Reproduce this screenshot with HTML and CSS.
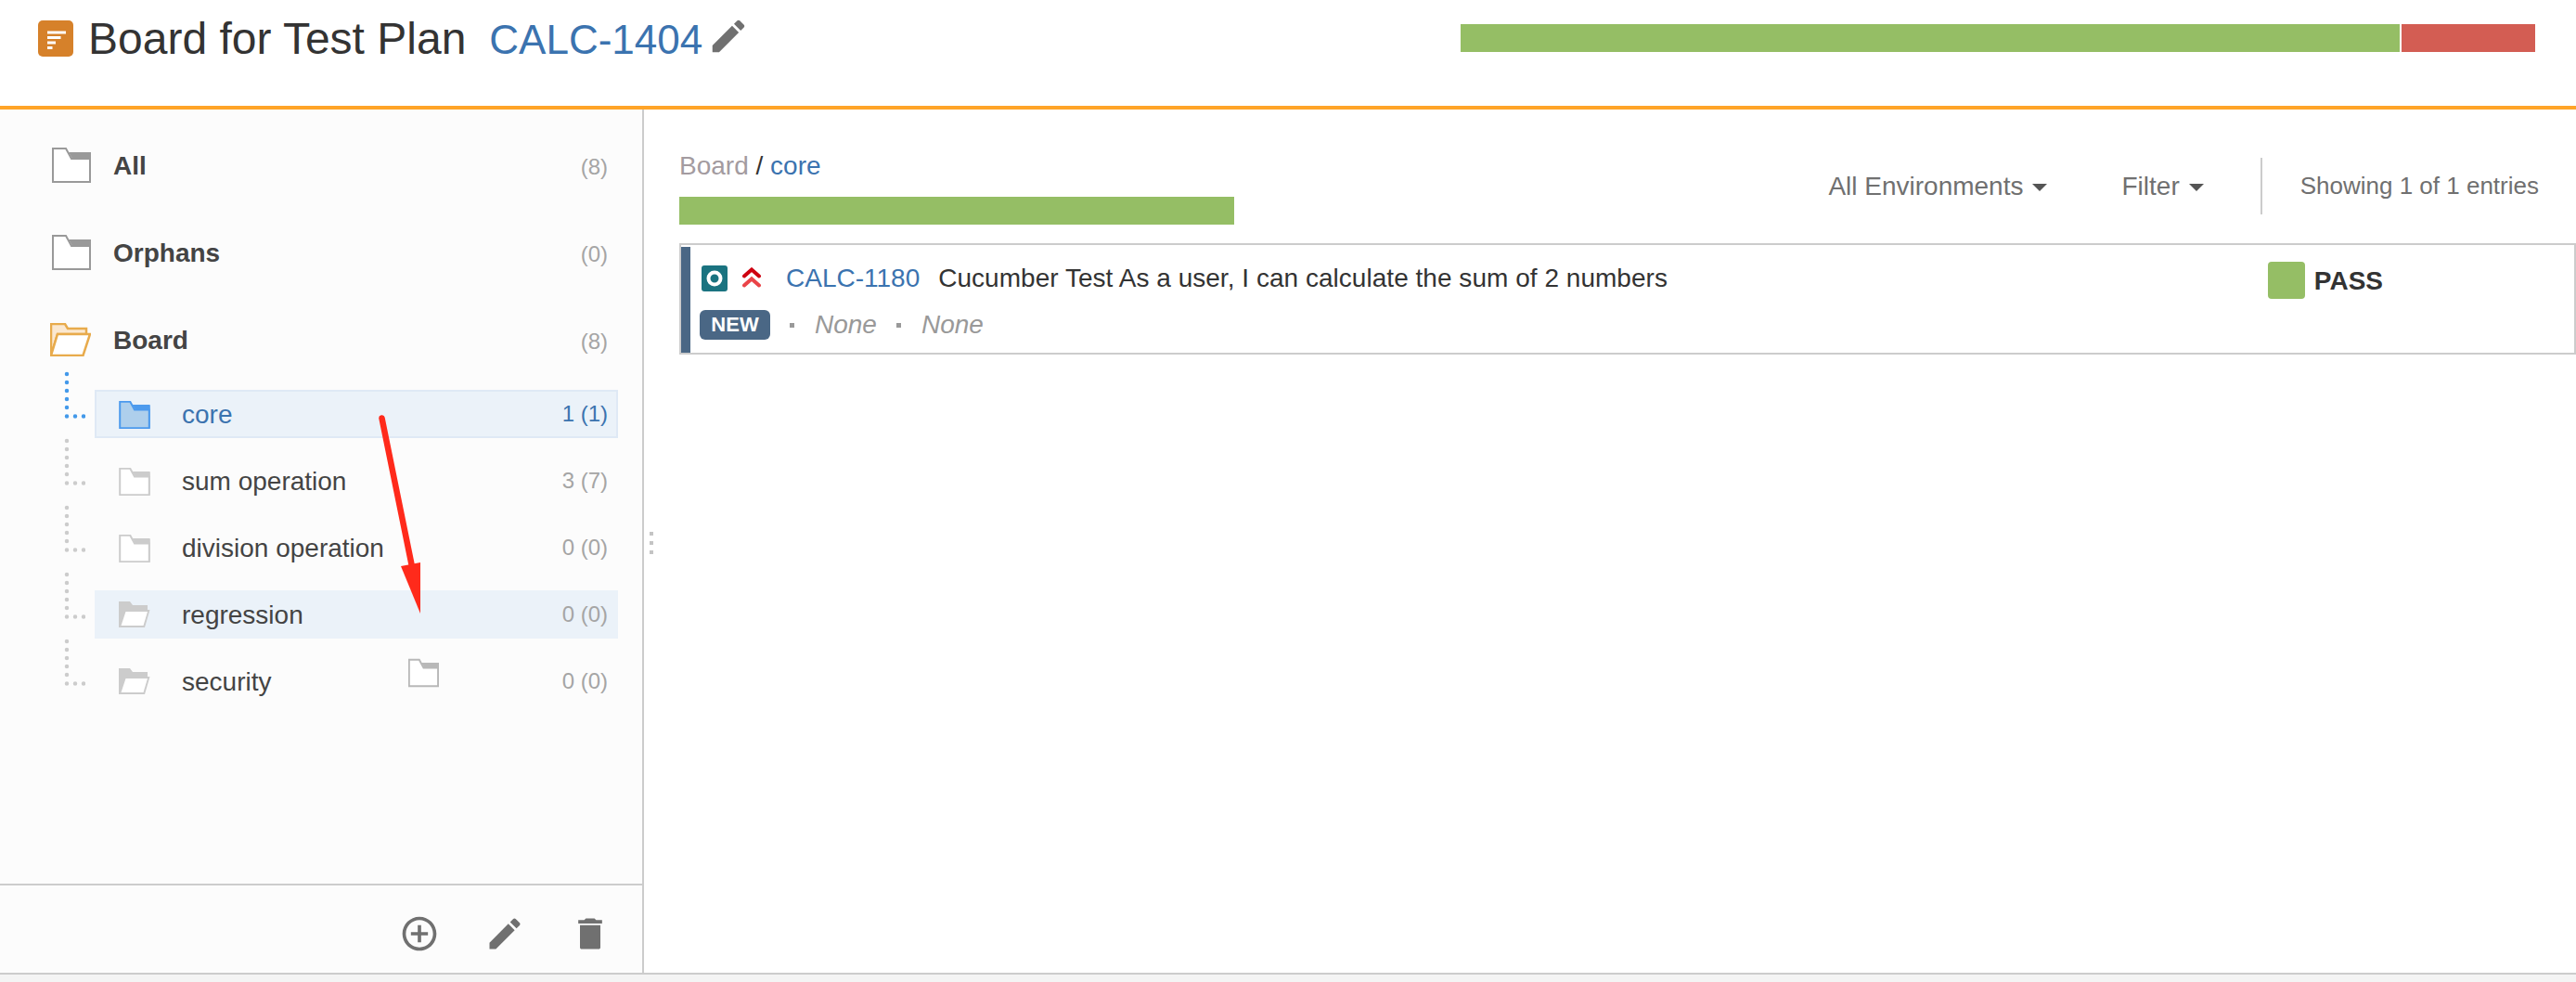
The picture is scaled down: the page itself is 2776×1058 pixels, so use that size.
FILE: index.html
```
<!DOCTYPE html>
<html lang="en">
<head>
    <meta charset="UTF-8">
    <meta name="viewport" content="width=device-width, initial-scale=1.0">
    <title>Board for Test Plan CALC-1404</title>
    <link rel="stylesheet" href="styles.css">
</head>
<body>
    <!-- shared icons -->
    <svg class="sprite">
        <symbol id="folder" viewBox="0 0 42 38">
            <path class="folder-back" d="M18 5H42V12H22Z"/>
            <path class="folder-front" d="M1 1H15L21 12H41V37H1Z"/>
            <path class="folder-side" d="M41 6V37"/>
        </symbol>
        <symbol id="folder-open" viewBox="0 0 34 28">
            <path d="M0 0H12L15 4H31V9H33.5L28 28H0Z"/>
            <path class="folder-hole" d="M7.5 11H31L26.5 26H2.5Z"/>
        </symbol>
        <symbol id="branch" viewBox="0 0 24 52">
            <path d="M4 3V3.1M4 12V12.1M4 21V21.1M4 30V30.1M4 39V39.1M4 48.5V48.6M13 48.5V48.6M22 48.5V48.6"/>
        </symbol>
        <symbol id="edit" viewBox="0 0 24 24">
            <path d="M3 17.25V21h3.75L17.81 9.94l-3.75-3.75L3 17.25zM20.71 7.04c.39-.39.39-1.02 0-1.41l-2.34-2.34c-.39-.39-1.02-.39-1.41 0l-1.83 1.83 3.75 3.75 1.83-1.83z"/>
        </symbol>
    </svg>

    <header class="header">
        <svg class="plan-icon" viewBox="0 0 38 39">
            <rect width="38" height="39" rx="5" fill="#d6812a"/>
            <path d="M10 13H30M10 18.5H24.5M10 24H19M10 29.5H15.5" stroke="#fff" stroke-width="3"/>
        </svg>
        <h1 class="title">Board for Test Plan</h1>
        <a class="title-key">CALC-1404</a>
        <svg class="title-edit"><use href="#edit"/></svg>
        <div class="progress header-progress">
            <div class="bar pass" style="width: 1012px"></div>
            <div class="bar fail" style="width: 144px"></div>
        </div>
    </header>

    <div class="content">
        <aside class="sidebar">
            <div class="folders">
                <div class="root">
                    <svg class="root-icon"><use href="#folder"/></svg>
                    <span class="root-name">All</span>
                    <span class="count">(8)</span>
                </div>
                <div class="root">
                    <svg class="root-icon"><use href="#folder"/></svg>
                    <span class="root-name">Orphans</span>
                    <span class="count">(0)</span>
                </div>
                <div class="root">
                    <svg class="board-icon" viewBox="0 0 44 36">
                        <path d="M1 35V1H16L19 6H39V12H8L1 35Z" fill="#fbe8d0"/>
                        <path d="M8 12H43L35.5 35H1Z" fill="#fff"/>
                    </svg>
                    <span class="root-name">Board</span>
                    <span class="count">(8)</span>
                </div>

                <div class="item selected">
                    <svg class="branch"><use href="#branch"/></svg>
                    <div class="row">
                        <svg class="item-icon"><use href="#folder"/></svg>
                        <span class="item-name">core</span>
                        <span class="count">1 (1)</span>
                    </div>
                </div>
                <div class="item">
                    <svg class="branch"><use href="#branch"/></svg>
                    <div class="row">
                        <svg class="item-icon"><use href="#folder"/></svg>
                        <span class="item-name">sum operation</span>
                        <span class="count">3 (7)</span>
                    </div>
                </div>
                <div class="item">
                    <svg class="branch"><use href="#branch"/></svg>
                    <div class="row">
                        <svg class="item-icon"><use href="#folder"/></svg>
                        <span class="item-name">division operation</span>
                        <span class="count">0 (0)</span>
                    </div>
                </div>
                <div class="item target">
                    <svg class="branch"><use href="#branch"/></svg>
                    <div class="row">
                        <svg class="item-icon open"><use href="#folder-open"/></svg>
                        <span class="item-name">regression</span>
                        <span class="count">0 (0)</span>
                    </div>
                </div>
                <div class="item">
                    <svg class="branch"><use href="#branch"/></svg>
                    <div class="row">
                        <svg class="item-icon open"><use href="#folder-open"/></svg>
                        <span class="item-name">security</span>
                        <span class="count">0 (0)</span>
                    </div>
                </div>
            </div>
            <div class="toolbar">
                <svg class="tool" viewBox="0 0 24 24"><path d="M13 7h-2v4H7v2h4v4h2v-4h4v-2h-4V7zm-1-5C6.48 2 2 6.48 2 12s4.48 10 10 10 10-4.48 10-10S17.52 2 12 2zm0 18c-4.41 0-8-3.59-8-8s3.59-8 8-8 8 3.59 8 8-3.59 8-8 8z"/></svg>
                <svg class="tool"><use href="#edit"/></svg>
                <svg class="tool" viewBox="0 0 24 24"><path d="M6 20c0 .6.4 1 1 1h10c.6 0 1-.4 1-1V7H6v13zM19 4h-3.5l-1-1h-5l-1 1H5v2h14V4z"/></svg>
            </div>
        </aside>

        <div class="splitter"><i></i><i></i><i></i></div>

        <main class="main">
            <div class="main-top">
                <div>
                    <div class="breadcrumb"><span class="crumb">Board</span> / <a class="link">core</a></div>
                    <div class="progress"><div class="bar pass" style="width: 598px"></div></div>
                </div>
                <div class="filters">
                    <span class="dropdown environments">All Environments</span>
                    <span class="dropdown">Filter</span>
                    <span class="showing">Showing 1 of 1 entries</span>
                </div>
            </div>

            <div class="card">
                <div class="card-info">
                    <div class="card-line">
                        <svg class="cucumber" viewBox="0 0 28 28">
                            <rect width="28" height="28" rx="3" fill="#1a7380"/>
                            <circle cx="14" cy="14" r="6.5" fill="none" stroke="#fff" stroke-width="4"/>
                        </svg>
                        <svg class="priority" viewBox="0 0 20 22">
                            <path d="M2 9.5L10 2.5L18 9.5" stroke="#ce0010"/>
                            <path d="M2 19.5L10 12.5L18 19.5" stroke="#ea4448"/>
                        </svg>
                        <a class="link card-key">CALC-1180</a>
                        <span class="summary">Cucumber Test As a user, I can calculate the sum of 2 numbers</span>
                    </div>
                    <div class="card-line meta">
                        <span class="lozenge">NEW</span>
                        <i class="dot"></i>
                        <em>None</em>
                        <i class="dot"></i>
                        <em>None</em>
                    </div>
                </div>
                <div class="status"><span class="status-box"></span>PASS</div>
            </div>
        </main>
    </div>

    <!-- folder being dragged from core to regression -->
    <svg class="drag-arrow" viewBox="0 0 60 220">
        <path d="M11.5 10.5L43.5 168" stroke="#ff2a1b" stroke-width="6.5" stroke-linecap="round"/>
        <path d="M32 170L53 166V221Z" fill="#ff2a1b"/>
    </svg>
    <svg class="drag-folder"><use href="#folder"/></svg>
</body>
</html>
```
FILE: styles.css
```
* {
    box-sizing: border-box;
}
body {
    margin: 0;
    height: 1058px;
    background-color: #f4f4f4;
    color: #333;
    font-family: "Liberation Sans", Arial, sans-serif;
    font-size: 28px;
    line-height: 32px;
    overflow: hidden;
}
svg {
    display: block;
    flex: none;
}
.sprite {
    position: absolute;
    width: 0;
    height: 0;
}
.link {
    color: #3b73af;
}

/* header */
.header {
    display: flex;
    align-items: flex-start;
    height: 118px;
    padding: 0 44px 0 41px;
    background-color: #fff;
    border-bottom: 4px solid #ffa428;
}
.plan-icon {
    width: 38px;
    height: 39px;
    margin-top: 22px;
}
.title {
    margin: 15px 0 0 16px;
    font-size: 48px;
    font-weight: normal;
    line-height: 54px;
    white-space: nowrap;
}
.title-key {
    margin: 16px 0 0 25px;
    font-size: 44px;
    line-height: 54px;
    color: #3b73af;
}
.title-edit {
    width: 46px;
    height: 46px;
    margin: 16px 0 0 5px;
    fill: #707070;
}
.progress {
    display: flex;
    gap: 2px;
}
.bar {
    height: 30px;
}
.pass {
    background-color: #95be65;
}
.fail {
    background-color: #d35d53;
}
.header-progress {
    margin: 26px 0 0 auto;
}

/* sidebar */
.content {
    display: flex;
    height: 932px;
    background-color: #fff;
    border-bottom: 2px solid #ccc;
}
.sidebar {
    display: flex;
    flex-direction: column;
    width: 694px;
    background-color: #fcfcfc;
    border-right: 2px solid #ccc;
}
.folders {
    flex: 1;
    padding: 13px 26px 0 54px;
}
.root {
    display: flex;
    align-items: center;
    height: 94px;
    padding-right: 11px;
}
.root-icon {
    width: 42px;
    height: 38px;
    margin: 0 24px 0 2px;
    color: #999;
}
.board-icon {
    width: 44px;
    height: 36px;
    margin: 0 24px 0 0;
    stroke: #e8ab4c;
    stroke-width: 2.5;
}
.root-name {
    padding-top: 2px;
    font-weight: bold;
    color: #444;
}
.count {
    margin-left: auto;
    font-size: 24px;
    color: #a5a5a5;
}
.root .count {
    padding-top: 4px;
}
.folder-back {
    fill: currentColor;
}
.folder-front {
    fill: var(--folder-fill, #fff);
    stroke: currentColor;
    stroke-width: 2;
    vector-effect: non-scaling-stroke;
}
.folder-side {
    stroke: currentColor;
    stroke-width: 2;
}
.item {
    display: flex;
    height: 52px;
    margin-bottom: 20px;
    padding-left: 14px;
}
.root + .item {
    margin-top: 7px;
}
.branch {
    width: 24px;
    height: 52px;
    margin: -20px 10px 0 0;
    stroke: #ccc;
    stroke-width: 4.5;
    stroke-linecap: round;
}
.row {
    display: flex;
    flex: 1;
    align-items: center;
    padding: 0 9px 0 24px;
    border: 2px solid transparent;
}
.item-icon {
    width: 34px;
    height: 30px;
    margin: 2px 34px 0 0;
    color: #ccc;
}
.open {
    height: 28px;
    margin-top: 0;
    fill: #ccc;
}
.folder-hole {
    fill: #fff;
}
.item-name {
    padding-top: 1px;
    color: #444;
}
.selected .branch {
    stroke: #4399ea;
}
.selected .row {
    background-color: #ebf2f9;
    border-color: #dfe9f5;
}
.selected .item-icon {
    color: #4c9aed;
    --folder-fill: #aecfec;
}
.selected .item-name,
.selected .count {
    color: #3b73af;
}
.target .row {
    background-color: #ebf2f9;
    border-color: #ebf2f9;
}
.toolbar {
    display: flex;
    justify-content: flex-end;
    gap: 48px;
    height: 96px;
    padding: 30px 34px 0 0;
    border-top: 2px solid #ccc;
}
.tool {
    width: 44px;
    height: 44px;
    fill: #707070;
}

/* main */
.splitter {
    display: flex;
    flex-direction: column;
    justify-content: center;
    gap: 6px;
    width: 38px;
    padding: 3px 0 0 6px;
}
.splitter i {
    width: 4px;
    height: 4px;
    background-color: #c4c4c4;
}
.main {
    flex: 1;
    padding-top: 44px;
}
.main-top {
    display: flex;
    justify-content: space-between;
    height: 100px;
}
.breadcrumb {
    padding-top: 1px;
    margin-bottom: 17px;
}
.crumb {
    color: #a39ba0;
}
.filters {
    display: flex;
    align-items: center;
    height: 60px;
    margin-top: 8px;
    padding-right: 40px;
    color: #707070;
}
.dropdown {
    display: flex;
    align-items: center;
    margin-right: 61px;
    padding-top: 1px;
}
.dropdown::after {
    content: "";
    margin: 3px 0 0 10px;
    border: 8px solid transparent;
    border-top-color: #555;
    border-bottom: 0;
}
.environments {
    margin-right: 80px;
}
.showing {
    padding-left: 41px;
    border-left: 2px solid #ccc;
    font-size: 26px;
    line-height: 61px;
}
.card {
    display: flex;
    justify-content: space-between;
    height: 120px;
    padding: 2px 206px 0 0;
    border: 2px solid #ccc;
}
.card-info {
    padding: 18px 0 0 10px;
    border-left: 10px solid #4a6785;
}
.card-line {
    display: flex;
    align-items: center;
    height: 32px;
}
.cucumber {
    width: 28px;
    height: 28px;
    margin: 0 16px 0 2px;
}
.priority {
    width: 20px;
    height: 22px;
    margin: -2px 27px 0 0;
    fill: none;
    stroke-width: 4;
    stroke-linecap: round;
}
.card-key {
    margin-right: 20px;
}
.summary {
    letter-spacing: 0.03px;
}
.meta {
    margin-top: 18px;
    color: #999;
}
.lozenge {
    width: 76px;
    height: 32px;
    border-radius: 6px;
    background-color: #4a6785;
    color: #fff;
    font-size: 22px;
    font-weight: bold;
    text-align: center;
}
.dot {
    width: 5px;
    height: 5px;
    margin: 0 22px 0 21px;
    background-color: #999;
}
.status {
    display: flex;
    height: 40px;
    margin-top: 16px;
    font-weight: bold;
    line-height: 41px;
}
.status-box {
    width: 40px;
    height: 40px;
    margin-right: 10px;
    border-radius: 4px;
    background-color: #95be65;
}

/* drag and drop overlay */
.drag-arrow {
    position: absolute;
    left: 400px;
    top: 440px;
    width: 60px;
    height: 220px;
    overflow: visible;
}
.drag-folder {
    position: absolute;
    left: 440px;
    top: 709px;
    width: 33px;
    height: 32px;
    color: #b8b8b8;
}
```
